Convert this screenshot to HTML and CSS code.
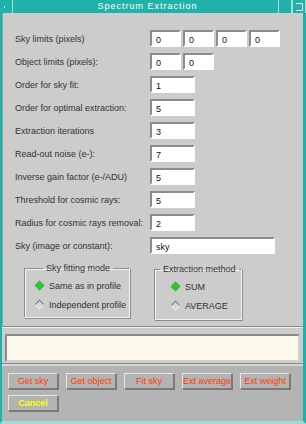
FILE: index.html
```html
<!DOCTYPE html>
<html lang="en">
<head>
  <meta charset="UTF-8" />
  <title>Spectrum Extraction</title>
  <link rel="stylesheet" href="styles.css">
</head>
<body>
  <div class="window">
    <div class="titlebar">
      <span class="tb-btn tb-menu"><i></i></span>
      <span class="tb-title">Spectrum Extraction</span>
      <span class="tb-btn"></span>
      <span class="tb-btn tb-max"><i></i></span>
    </div>

    <div class="panel">
      <div class="form">
        <label>Sky limits (pixels)</label>
        <div class="fields">
          <input class="fld small" value="0">
          <input class="fld small" value="0">
          <input class="fld small" value="0">
          <input class="fld small" value="0">
        </div>

        <label>Object limits (pixels):</label>
        <div class="fields">
          <input class="fld small" value="0">
          <input class="fld small" value="0">
        </div>

        <label>Order for sky fit:</label>
        <div class="fields"><input class="fld mid" value="1"></div>

        <label>Order for optimal extraction:</label>
        <div class="fields"><input class="fld mid" value="5"></div>

        <label>Extraction iterations</label>
        <div class="fields"><input class="fld mid" value="3"></div>

        <label>Read-out noise (e-):</label>
        <div class="fields"><input class="fld mid" value="7"></div>

        <label>Inverse gain factor (e-/ADU)</label>
        <div class="fields"><input class="fld mid" value="5"></div>

        <label>Threshold for cosmic rays:</label>
        <div class="fields"><input class="fld mid" value="5"></div>

        <label>Radius for cosmic rays removal:</label>
        <div class="fields"><input class="fld mid" value="2"></div>

        <label>Sky (image or constant):</label>
        <div class="fields"><input class="fld wide" value="sky"></div>
      </div>

      <div class="modes">
        <fieldset class="group group-sky">
          <legend>Sky fitting mode</legend>
          <div class="opt"><span class="dia on"></span>Same as in profile</div>
          <div class="opt"><span class="dia"></span>Independent profile</div>
        </fieldset>
        <fieldset class="group group-ext">
          <legend>Extraction method</legend>
          <div class="opt"><span class="dia on"></span>SUM</div>
          <div class="opt"><span class="dia"></span>AVERAGE</div>
        </fieldset>
      </div>
    </div>

    <div class="msgbar">
      <div class="msg"></div>
    </div>

    <div class="actions">
      <button class="btn">Get sky</button>
      <button class="btn">Get object</button>
      <button class="btn">Fit sky</button>
      <button class="btn">Ext average</button>
      <button class="btn">Ext weight</button>
      <button class="btn cancel">Cancel</button>
    </div>
  </div>
</body>
</html>
```

FILE: styles.css
```css
body {
  margin: 0;
  background: #ffffff;
  font-family: 'Liberation Sans', Arial, sans-serif;
}

.window {
  width: 306px;
  height: 424px;
  box-sizing: border-box;
  border-left: 2px solid #20b2aa;
  border-right: 3px solid #20b2aa;
  border-bottom: 3px solid #9edcd6;
  background: #cccccc;
  display: flex;
  flex-direction: column;
}

/* title bar */
.titlebar {
  height: 13px;
  flex: none;
  margin-left: -2px;
  margin-right: -3px;
  background: #20b2aa;
  display: flex;
  align-items: stretch;
}

.tb-btn {
  width: 12px;
  border-right: 1px solid #9fe0da;
  border-left: 1px solid #9fe0da;
  position: relative;
}

.tb-menu {
  border-left: none;
  width: 12px;
}

.tb-menu i {
  position: absolute;
  left: 4px;
  top: 6px;
  width: 1px;
  height: 2px;
  background: #ffffff;
}

.tb-max i {
  position: absolute;
  left: 3px;
  top: 3px;
  width: 6px;
  height: 6px;
  border: 1px solid #ffffff;
  border-left: none;
}

.tb-title {
  flex: 1;
  text-align: center;
  color: #ffffff;
  font-size: 9px;
  line-height: 13px;
  letter-spacing: 1px;
  padding-left: 4px;
}

/* main form */
.panel {
  flex: none;
  border-left: 1px solid #9a9a9a;
  border-bottom: 1px solid #8a8a8a;
  padding: 14px 0 0 12px;
  height: 314px;
  box-sizing: border-box;
}

.form {
  display: grid;
  grid-template-columns: 135px auto;
  grid-auto-rows: 23px;
  align-items: center;
}

.form label {
  font-size: 9px;
  color: #333333;
}

.fields {
  display: flex;
  gap: 2px;
}

.fld {
  box-sizing: border-box;
  height: 17px;
  padding: 2px 0 0 4px;
  margin: 0;
  border: 2px solid #ffffff;
  border-top-color: #8c8c8c;
  border-left-color: #8c8c8c;
  background: #ffffff;
  font-family: 'Liberation Sans', Arial, sans-serif;
  font-size: 9px;
  color: #111111;
  outline: none;
}

.fld.small { width: 31px; }
.fld.mid { width: 45px; }
.fld.wide { width: 125px; }

/* radio groups */
.modes {
  display: flex;
  gap: 24px;
  padding: 6px 0 0 9px;
  align-items: flex-start;
}

.group {
  margin: 0;
  padding: 3px 0 0 0;
  border: 1px solid #8c8c8c;
  border-right-color: #f2f2f2;
  border-bottom-color: #f2f2f2;
  box-shadow: inset 1px 1px #f2f2f2, 1px 1px #8c8c8c;
  font-size: 9px;
  color: #333333;
}

.group legend {
  padding: 0 3px;
  font-size: 9px;
  color: #333333;
  white-space: nowrap;
}

.group-sky {
  width: 106px;
  height: 55px;
  box-sizing: border-box;
}

.group-sky legend {
  margin-left: 18px;
}

.group-ext {
  width: 88px;
  height: 56px;
  box-sizing: border-box;
  margin-top: 1px;
}

.group-ext legend {
  margin-left: 5px;
}

.opt {
  display: flex;
  align-items: center;
  gap: 5px;
  height: 19px;
  margin-left: 10px;
}

.group-ext .opt {
  margin-left: 16px;
}

.dia {
  width: 5px;
  height: 5px;
  transform: rotate(45deg);
  border: 1px solid #eeeeee;
  border-top-color: #777777;
  border-left-color: #777777;
  background: #d4d4d4;
  margin: 0 1px;
}

.dia.on {
  background: #00e600;
  border-color: #888888;
}

/* message area */
.msgbar {
  flex: none;
  border-top: 1px solid #f0f0f0;
  padding: 6px 3px 1px 3px;
  border-bottom: 1px solid #8a8a8a;
}

.msg {
  height: 28px;
  box-sizing: border-box;
  background: #fdf8ec;
  border: 2px solid #d0d0d0;
  border-top-color: #8a8a8a;
  border-left-color: #8a8a8a;
}

/* buttons */
.actions {
  flex: 1;
  background: #b3b3b3;
  border-top: 2px solid #d6d6d6;
  padding: 7px 0 0 6px;
  display: flex;
  flex-wrap: wrap;
  align-content: flex-start;
  column-gap: 8px;
  row-gap: 6px;
}

.btn {
  width: 50px;
  height: 16px;
  box-sizing: border-box;
  padding: 0;
  margin: 0;
  background: #b3b3b3;
  border: 1px solid #7a7a7a;
  border-top-color: #e6e6e6;
  border-left-color: #e6e6e6;
  box-shadow: 1px 1px #7a7a7a;
  font-family: 'Liberation Sans', Arial, sans-serif;
  font-size: 9px;
  color: #ff3c00;
  white-space: nowrap;
  overflow: hidden;
}

.btn.cancel {
  color: #ffff00;
  font-weight: bold;
}
```
